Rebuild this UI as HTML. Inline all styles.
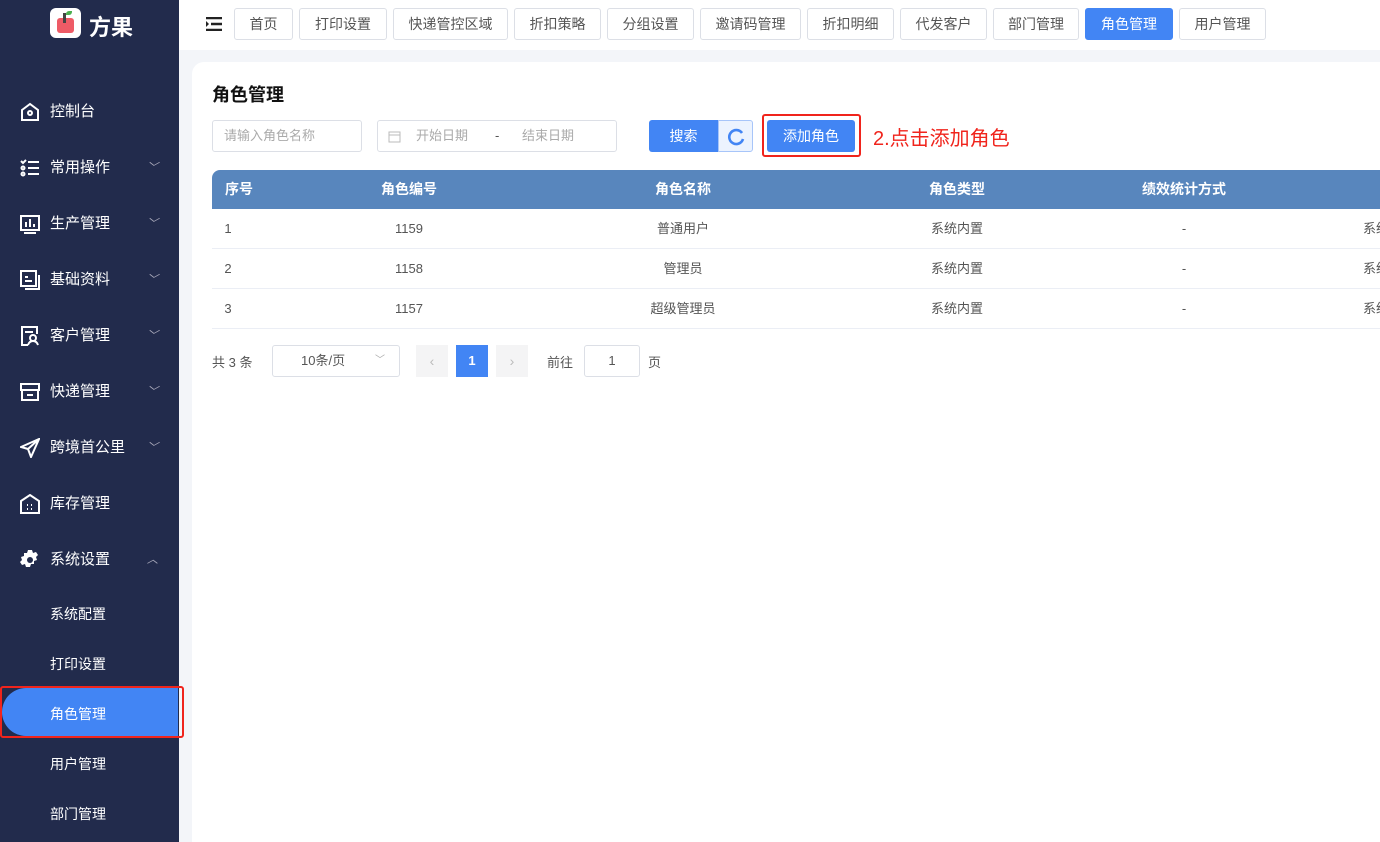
<!DOCTYPE html>
<html style="width:1380px;height:842px;overflow:hidden"><head><meta charset="utf-8"><style>
*{box-sizing:border-box;margin:0;padding:0}
body{width:1380px;height:842px;overflow:hidden;font-family:"Liberation Sans","Noto Sans CJK SC",sans-serif;background:#f3f5f9;position:relative;font-size:14px;color:#333}
.side{position:absolute;left:0;top:0;width:179px;height:842px;background:#222b4c;color:#fff}
.logo{position:absolute;left:50px;top:8px;width:31px;height:30px;background:#fff;border-radius:6px}
.logo i{position:absolute;left:7px;top:10px;width:17px;height:15px;background:#ee5b66;border-radius:3px}
.logo b{position:absolute;left:13px;top:5px;width:3px;height:10px;background:#444}
.logo em{position:absolute;left:16px;top:3px;width:6px;height:4px;background:#4caf50;border-radius:3px 0}
.brand{position:absolute;left:89px;top:10px;font-size:22px;font-weight:bold;color:#fff}
.mi{position:absolute;left:0;width:179px;height:40px;line-height:40px;font-size:15px}
.mi svg{position:absolute;left:20px;top:10px}
.mi span{position:absolute;left:50px}
.mi .ar{position:absolute;left:147px;top:0;font-size:11px;color:#aab}
.sub{position:absolute;left:50px;font-size:14px;color:#fff}
.act{position:absolute;left:2px;top:688px;width:176px;height:48px;background:#4285f4;border-radius:24px 0 0 24px}
.top{position:absolute;left:179px;top:0;width:1201px;height:50px;background:#fff}
.tab{position:absolute;top:8px;height:32px;line-height:30px;border:1px solid #dcdfe6;border-radius:3px;font-size:14px;color:#555;text-align:center;background:#fff}
.tab.on{background:#4285f4;color:#fff;border-color:#4285f4}
.card{position:absolute;left:192px;top:62px;width:1188px;height:780px;background:#fff;border-radius:12px 0 0 0}
.abs{position:absolute}
.inp{position:absolute;height:32px;border:1px solid #dcdfe6;border-radius:3px;font-size:13px;color:#aaa;line-height:30px}
.th{position:absolute;top:170px;left:212px;width:1168px;height:39px;background:#5886bd;border-radius:8px 0 0 0;color:#fff;font-weight:bold;font-size:14px}
.row{position:absolute;left:212px;width:1168px;height:40px;border-bottom:1px solid #ebeef5;font-size:13px;color:#555}
.c{position:absolute;top:0;line-height:40px;text-align:center;transform:translateX(-50%);white-space:nowrap}
.th .c{line-height:39px}
.red{position:absolute;border:2px solid #f0241c;border-radius:3px}
.note{position:absolute;color:#f0241c;font-size:20px}
</style></head><body>
<div class="side">
<div class="logo"><i></i><b></b><em></em></div><div class="brand">方果</div>
<div class="mi" style="top:92px"><svg width="20" height="20" viewBox="0 0 20 20" fill="none" stroke="#fff" stroke-width="2"><path d="M2 8L10 2l8 6v10H2z"/><circle cx="10" cy="11" r="2"/></svg><span>控制台</span></div>
<div class="mi" style="top:148px"><svg width="20" height="20" viewBox="0 0 20 20" fill="none" stroke="#fff" stroke-width="2"><path d="M8 4h11M8 10h11M8 16h11"/><circle cx="3" cy="10" r="1.5"/><circle cx="3" cy="16" r="1.5"/><path d="M1 3l2 2 3-3"/></svg><span>常用操作</span><em class="ar">﹀</em></div>
<div class="mi" style="top:204px"><svg width="20" height="20" viewBox="0 0 20 20" fill="none" stroke="#fff" stroke-width="2"><rect x="1" y="2" width="18" height="14"/><path d="M6 13V8M10 13V5M14 13V10M4 19h12"/></svg><span>生产管理</span><em class="ar">﹀</em></div>
<div class="mi" style="top:260px"><svg width="20" height="20" viewBox="0 0 20 20" fill="none" stroke="#fff" stroke-width="2"><rect x="1" y="1" width="15" height="15"/><path d="M19 5v14H5M5 7h3M5 11h7"/></svg><span>基础资料</span><em class="ar">﹀</em></div>
<div class="mi" style="top:316px"><svg width="20" height="20" viewBox="0 0 20 20" fill="none" stroke="#fff" stroke-width="2"><path d="M8 19H2V1h15v7"/><circle cx="13" cy="12" r="3"/><path d="M8 19c1-3 3-4 5-4s4 1 5 4M5 6h8"/></svg><span>客户管理</span><em class="ar">﹀</em></div>
<div class="mi" style="top:372px"><svg width="20" height="20" viewBox="0 0 20 20" fill="none" stroke="#fff" stroke-width="2"><rect x="1" y="2" width="18" height="6"/><path d="M2 8v10h16V8M7 13h6"/></svg><span>快递管理</span><em class="ar">﹀</em></div>
<div class="mi" style="top:428px"><svg width="20" height="20" viewBox="0 0 20 20" fill="none" stroke="#fff" stroke-width="2"><path d="M19 1L1 9l7 2 3 8z M8 11l11-10"/></svg><span>跨境首公里</span><em class="ar">﹀</em></div>
<div class="mi" style="top:484px"><svg width="20" height="20" viewBox="0 0 20 20" fill="none" stroke="#fff" stroke-width="2"><path d="M1 7l9-6 9 6v12H1z"/><path d="M7 11h1M11 11h1M7 15h1M11 15h1"/></svg><span>库存管理</span></div>
<div class="mi" style="top:540px"><svg width="20" height="20" viewBox="0 0 20 20"><path fill="#fff" d="M8 0h4l1 3 3-1 2 3-2 2 1 3-3 1 0 3-3 0-1 3h-4l-1-3-3 1-2-3 2-2-1-3 3-1-0-3 3 0z"/><circle cx="10" cy="10" r="3" fill="#222b4c"/></svg><span>系统设置</span><em class="ar">︿</em></div>
<div class="sub" style="top:604px">系统配置</div>
<div class="sub" style="top:654px">打印设置</div>
<div class="act"></div>
<div class="sub" style="top:704px">角色管理</div>
<div class="sub" style="top:754px">用户管理</div>
<div class="sub" style="top:804px">部门管理</div>
</div>
<div class="red" style="left:0;top:686px;width:184px;height:52px"></div>
<div class="note" style="left:197px;top:700px">1.点击角色管理</div>
<div class="top">
<svg class="abs" style="left:27px;top:17px" width="16" height="14" viewBox="0 0 16 14"><path d="M0 1h16M5 7h11M0 13h16" stroke="#222" stroke-width="2.4"/><path d="M0 4l3 3-3 3z" fill="#222"/></svg>
<div class="tab" style="left:55px;width:59px">首页</div>
<div class="tab" style="left:120px;width:88px">打印设置</div>
<div class="tab" style="left:214px;width:115px">快递管控区域</div>
<div class="tab" style="left:335px;width:87px">折扣策略</div>
<div class="tab" style="left:428px;width:87px">分组设置</div>
<div class="tab" style="left:521px;width:101px">邀请码管理</div>
<div class="tab" style="left:628px;width:87px">折扣明细</div>
<div class="tab" style="left:721px;width:87px">代发客户</div>
<div class="tab" style="left:814px;width:86px">部门管理</div>
<div class="tab on" style="left:906px;width:88px">角色管理</div>
<div class="tab" style="left:1000px;width:87px">用户管理</div>
</div>
<div class="card"></div>
<div class="abs" style="left:212px;top:81px;font-size:18px;font-weight:bold;color:#111">角色管理</div>
<div class="inp" style="left:212px;top:120px;width:150px;padding-left:11px">请输入角色名称</div>
<div class="inp" style="left:377px;top:120px;width:240px">
<svg class="abs" style="left:10px;top:9px" width="13" height="13" viewBox="0 0 13 13" fill="none" stroke="#bbb"><rect x="1" y="2" width="11" height="10"/><path d="M1 5h11"/></svg>
<span class="abs" style="left:38px">开始日期</span><span class="abs" style="left:117px;color:#555">-</span><span class="abs" style="left:144px">结束日期</span></div>
<div class="abs" style="left:649px;top:120px;width:69px;height:32px;background:#4285f4;border-radius:3px 0 0 3px;color:#fff;text-align:center;line-height:32px;font-size:14px">搜索</div>
<div class="abs" style="left:718px;top:120px;width:35px;height:32px;background:#ecf3fe;border:1px solid #a7c5f9;border-radius:0 3px 3px 0">
<svg class="abs" style="left:8px;top:7px" width="18" height="18" viewBox="0 0 18 18" fill="none" stroke="#4285f4" stroke-width="2.6"><path d="M15 5A7 7 0 1 0 16 11"/></svg></div>
<div class="abs" style="left:767px;top:120px;width:88px;height:32px;background:#4285f4;border-radius:3px;color:#fff;text-align:center;line-height:32px;font-size:14px">添加角色</div>
<div class="red" style="left:762px;top:114px;width:99px;height:43px"></div>
<div class="note" style="left:873px;top:122px">2.点击添加角色</div>
<div class="th"><span class="c" style="left:27px">序号</span><span class="c" style="left:197px">角色编号</span><span class="c" style="left:471px">角色名称</span><span class="c" style="left:745px">角色类型</span><span class="c" style="left:972px">绩效统计方式</span></div>
<div class="row" style="top:209px"><span class="c" style="left:16px">1</span><span class="c" style="left:197px">1159</span><span class="c" style="left:471px">普通用户</span><span class="c" style="left:745px">系统内置</span><span class="c" style="left:972px">-</span><span class="c" style="left:1164px">系统</span></div>
<div class="row" style="top:249px"><span class="c" style="left:16px">2</span><span class="c" style="left:197px">1158</span><span class="c" style="left:471px">管理员</span><span class="c" style="left:745px">系统内置</span><span class="c" style="left:972px">-</span><span class="c" style="left:1164px">系统</span></div>
<div class="row" style="top:289px"><span class="c" style="left:16px">3</span><span class="c" style="left:197px">1157</span><span class="c" style="left:471px">超级管理员</span><span class="c" style="left:745px">系统内置</span><span class="c" style="left:972px">-</span><span class="c" style="left:1164px">系统</span></div>
<div class="abs" style="left:212px;top:352px;font-size:13px;color:#555">共 3 条</div>
<div class="inp" style="left:272px;top:345px;width:128px;color:#555;padding-left:28px">10条/页<span class="abs" style="left:102px;color:#aaa;font-size:10px">﹀</span></div>
<div class="abs" style="left:416px;top:345px;width:32px;height:32px;background:#f4f4f5;color:#bbb;text-align:center;line-height:32px">‹</div>
<div class="abs" style="left:456px;top:345px;width:32px;height:32px;background:#4285f4;color:#fff;text-align:center;line-height:32px;font-weight:bold;font-size:13px">1</div>
<div class="abs" style="left:496px;top:345px;width:32px;height:32px;background:#f4f4f5;color:#bbb;text-align:center;line-height:32px">›</div>
<div class="abs" style="left:547px;top:352px;font-size:13px;color:#555">前往</div>
<div class="inp" style="left:584px;top:345px;width:56px;color:#555;text-align:center">1</div>
<div class="abs" style="left:648px;top:352px;font-size:13px;color:#555">页</div>
</body></html>
